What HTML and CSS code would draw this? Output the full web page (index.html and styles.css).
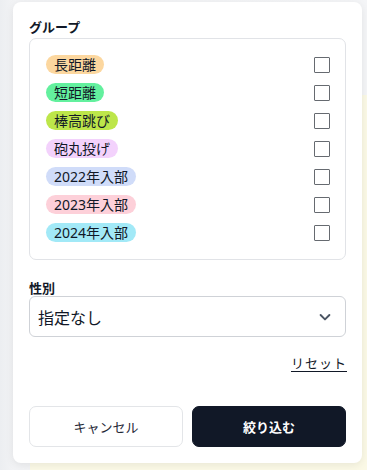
FILE: index.html
```html
<!DOCTYPE html>
<html lang="ja">
<head>
<meta charset="utf-8">
<link rel="stylesheet" href="styles.css">
</head>
<body>
<div class="backdrop">
  <div class="bg-card bg-card-right"></div>
  <div class="bg-card bg-card-bottom"></div>
  <div class="modal">
    <div class="field-label">グループ</div>
    <div class="group-box">
      <div class="row"><span class="tag t-orange">長距離</span><span class="check"></span></div>
      <div class="row"><span class="tag t-green">短距離</span><span class="check"></span></div>
      <div class="row"><span class="tag t-lime">棒高跳び</span><span class="check"></span></div>
      <div class="row"><span class="tag t-fuchsia">砲丸投げ</span><span class="check"></span></div>
      <div class="row"><span class="tag t-blue">2022年入部</span><span class="check"></span></div>
      <div class="row"><span class="tag t-pink">2023年入部</span><span class="check"></span></div>
      <div class="row"><span class="tag t-cyan">2024年入部</span><span class="check"></span></div>
    </div>
    <div class="field-label gender-label">性別</div>
    <div class="select">
      <span>指定なし</span>
      <svg width="16" height="16" viewBox="0 0 20 20" fill="none"><path d="M4.5 7.5l5.5 5.5 5.5-5.5" stroke="#4b5563" stroke-width="2.4" stroke-linecap="round" stroke-linejoin="round"/></svg>
    </div>
    <div class="reset-row"><span class="reset">リセット</span></div>
    <div class="actions">
      <button class="btn btn-cancel">キャンセル</button>
      <button class="btn btn-submit">絞り込む</button>
    </div>
  </div>
</div>
</body>
</html>
```
FILE: styles.css
```css
* { box-sizing: border-box; }
html, body { margin: 0; padding: 0; }
body {
  width: 367px;
  height: 470px;
  overflow: hidden;
  background: #eef0f3;
  font-family: "Noto Sans CJK JP", "Noto Sans", sans-serif;
  color: #111827;
}
.backdrop {
  position: relative;
  width: 367px;
  height: 470px;
  padding: 2px 5px 0 13px;
  background: linear-gradient(to right, #eceef1 0, #f2f3f5 13px, #f4f5f7 100%);
}
.bg-card {
  position: absolute;
  background: #fbf9e6;
}
.bg-card-right { left: 358px; top: 95px; width: 20px; height: 380px; }
.bg-card-bottom { left: 30px; top: 455px; width: 340px; height: 20px; }
.modal {
  position: relative;
  width: 349px;
  height: 461px;
  background: #fff;
  border-radius: 8px;
  box-shadow: 0 2px 8px rgba(0,0,0,0.08);
  padding: 16px 16px 0 16px;
  display: flex;
  flex-direction: column;
}
.field-label {
  font-size: 13px;
  font-weight: 700;
  line-height: 18px;
  height: 20px;
}
.group-box {
  border: 1px solid #e1e3e7;
  border-radius: 7px;
  padding: 16px 15px 17px 16px;
  display: flex;
  flex-direction: column;
  gap: 9px;
}
.row {
  display: flex;
  justify-content: space-between;
  align-items: center;
  height: 19px;
}
.tag {
  font-family: "Noto Sans", "Noto Sans CJK JP", sans-serif;
  font-size: 14px;
  line-height: 19px;
  height: 19px;
  padding: 0 8px;
  border-radius: 10px;
  color: #111827;
  letter-spacing: 0;
}
.t-orange { background: #fcd79f; }
.t-green { background: #63f09e; }
.t-lime { background: #bde64a; }
.t-fuchsia { background: #f3d2fc; }
.t-blue { background: #d0dcf9; }
.t-pink { background: #fdd0d9; }
.t-cyan { background: #a2e9f7; }
.check {
  width: 16px;
  height: 16px;
  border: 1.5px solid #666a70;
  border-radius: 1px;
  background: #fff;
}
.gender-label { margin-top: 19px; height: 17px; }
.select {
  height: 41px;
  border: 1px solid #cfd2d7;
  border-radius: 6px;
  display: flex;
  align-items: center;
  justify-content: space-between;
  padding: 0 12px 0 8px;
  font-size: 16px;
  color: #111827;
}
.reset-row {
  display: flex;
  justify-content: flex-end;
  margin-top: 17px;
  height: 19px;
}
.reset {
  font-size: 13px;
  line-height: 18px;
  text-decoration: underline;
  text-underline-offset: 3px;
  letter-spacing: 1px;
  margin-right: -1px;
}
.actions {
  margin-top: 33px;
  display: grid;
  grid-template-columns: 1fr 1fr;
  gap: 9px;
}
.btn {
  height: 41px;
  border-radius: 7px;
  font-family: "Noto Sans CJK JP", "Noto Sans", sans-serif;
  font-size: 13px;
}
.btn-cancel {
  background: #fff;
  border: 1px solid #e3e5e8;
  color: #1f2937;
}
.btn-submit {
  background: #111827;
  border: 1px solid #111827;
  color: #fff;
  font-weight: 700;
}
```
